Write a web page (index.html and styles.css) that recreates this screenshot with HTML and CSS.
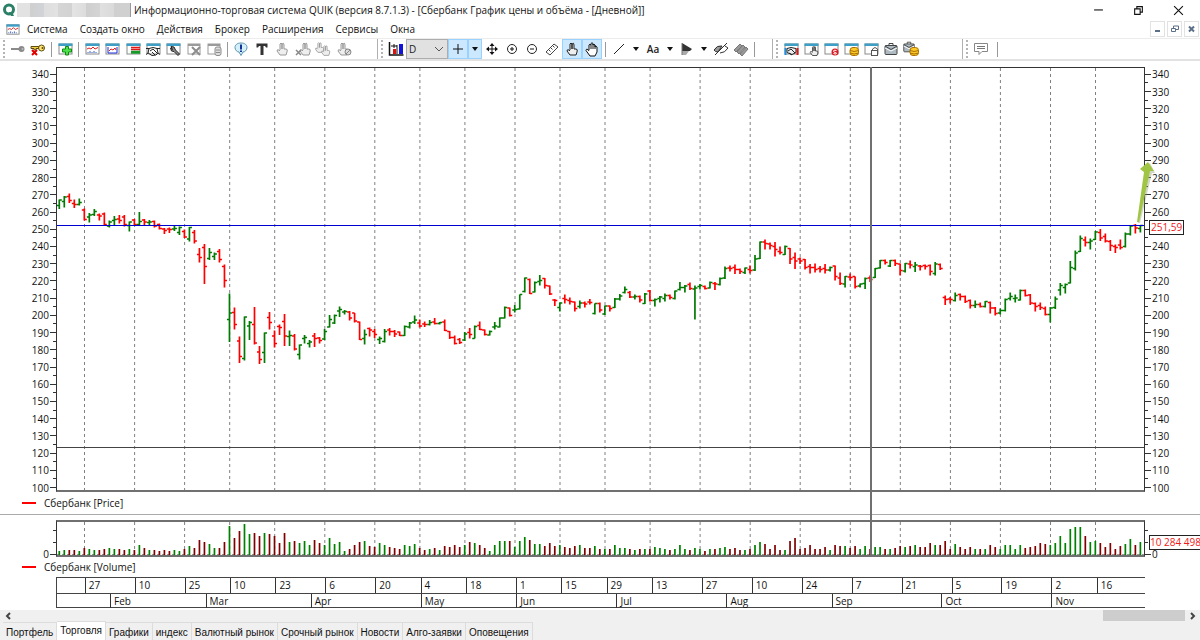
FILE: index.html
```html
<!DOCTYPE html>
<html lang="ru">
<head>
    <meta charset="UTF-8">
    <meta name="viewport" content="width=device-width, initial-scale=1.0">
    <title>Информационно-торговая система QUIK</title>
    <link rel="stylesheet" href="styles.css">
</head>
<body>

    <!-- Иконки панели инструментов -->
    <svg class="sprite" aria-hidden="true">
        <symbol id="win" viewBox="0 0 16 16">
            <rect x="2" y="3" width="13" height="10" fill="#fff" stroke="#8a8a8a"/>
            <rect x="1.500" y="2.500" width="14" height="2.500" fill="#3d9fc6"/>
        </symbol>
        <symbol id="win-grey" viewBox="0 0 16 16">
            <rect x="2" y="3" width="12" height="10" fill="#fff" stroke="#9a9a9a"/>
            <path d="M2 4h12" stroke="#9a9a9a" stroke-width="2"/>
        </symbol>
        <symbol id="key-grey" viewBox="0 0 16 16">
            <path d="M1 7h9v2H1z" fill="#8a8a8a"/>
            <circle cx="11.500" cy="8" r="3" fill="#8a8a8a"/><circle cx="12.500" cy="8" r="1" fill="#bbb"/>
        </symbol>
        <symbol id="key-x" viewBox="0 0 16 16">
            <path d="M1 5.500h8v2H6V9H4V7.500H1z" fill="#f2d24a" stroke="#5a4a10"/>
            <circle cx="11.500" cy="7" r="3" fill="#ffe36b" stroke="#5a4a10"/><circle cx="12.500" cy="7" r="1" fill="#5a4a10"/>
            <path d="M2 9l5 5M7 9l-5 5" stroke="#e00000" stroke-width="2"/>
        </symbol>
        <symbol id="win-plus" viewBox="0 0 16 16">
            <use href="#win"/>
            <path d="M8.500 5.500h3v2.500h3v3h-3v3h-3v-3h-3v-3h3z" fill="#4fe04a" stroke="#0a8a12"/>
        </symbol>
        <symbol id="win-chart" viewBox="0 0 16 16">
            <use href="#win"/>
            <path d="M3 8l2-1 2 1 2-2 2 2 3-1.500" fill="none" stroke="#e02020"/>
            <path d="M4 12v-1M6 12v-2M8 12v-1M10 12v-2M12 12v-1" stroke="#3a5fc0"/>
        </symbol>
        <symbol id="win-graph" viewBox="0 0 16 16">
            <use href="#win"/>
            <path d="M4 6v6h9V6" fill="none" stroke="#1c2fe0"/>
            <path d="M5 10l2-2 2 1 2-2 1 2" fill="none" stroke="#e02020"/>
        </symbol>
        <symbol id="win-book" viewBox="0 0 16 16">
            <use href="#win"/>
            <path d="M6 6.500h9M6 8.500h9" stroke="#e01818" stroke-width="1.500"/>
            <path d="M6 10.500h9M6 12h9" stroke="#169a28" stroke-width="1.500"/>
        </symbol>
        <symbol id="win-deal" viewBox="0 0 16 16">
            <use href="#win"/>
            <path d="M1 7.500h3l4-1 4 1h3M1 13.500l2-1.500 4 2.500 4-.5 2-2 2 1.500M4 7.500L3 12M12 7.500l1 4.500M5 10l3-2 4 4M7 11l3 3" fill="#fff" stroke="#222"/>
        </symbol>
        <symbol id="win-tool" viewBox="0 0 16 16">
            <use href="#win"/>
            <path d="M6 5.500l3 .5 1.500 3 4 4-1.500 1.500-4-4-2.500-.5-1-3 2 1.500z" fill="#888" stroke="#222"/>
        </symbol>
        <symbol id="win-x" viewBox="0 0 16 16">
            <use href="#win-grey"/>
            <path d="M6 6l8 8M14 6l-8 8" stroke="#8c8c8c" stroke-width="2"/>
        </symbol>
        <symbol id="win-doc" viewBox="0 0 16 16">
            <use href="#win-grey"/>
            <rect x="9" y="6" width="6" height="8.500" rx="2" fill="#ddd" stroke="#8c8c8c"/>
            <path d="M10 9h4M10 11.500h4" stroke="#8c8c8c"/>
        </symbol>
        <symbol id="note" viewBox="0 0 16 16">
            <path d="M8 2c4 0 6 2 6 4.500S12 11 10 11l-2 3.500L6 11C4 11 2 9 2 6.500S4 2 8 2z" fill="#d4f0fb" stroke="#5b93ad"/>
            <path d="M8 3.500v5M8 9.500v1.500" stroke="#12329a" stroke-width="2"/>
        </symbol>
        <symbol id="tee" viewBox="0 0 16 16">
            <path d="M2.500 2.500h11v4h-1.500l-1-1.500h-1.500v9h-3V5H5L4 6.500H2.500z" fill="#333"/>
        </symbol>
        <symbol id="hand" viewBox="0 0 16 16">
            <path d="M6 9V3q1-2 2 0v5V3q2-2 2 1v4l2 0q2 0 1 3l-1 3H6L3 10q0-2 2-1l1 1" fill="#eee" stroke="currentColor"/>
        </symbol>
        <symbol id="hand-x" viewBox="0 0 16 16">
            <use href="#hand" x="2"/>
            <path d="M1 9l5 5M6 9l-5 5" stroke="#888" stroke-width="1.500"/>
        </symbol>
        <symbol id="hands" viewBox="0 0 16 16">
            <use href="#hand" x="-2" y="0" width="13" height="13"/><use href="#hand" x="4" y="3" width="13" height="13"/>
        </symbol>
        <symbol id="hand-stop" viewBox="0 0 16 16">
            <use href="#hand" x="-1"/>
            <circle cx="12" cy="11" r="3" fill="#ddd" stroke="#888"/><path d="M10 13l4-4" stroke="#888"/>
        </symbol>
        <symbol id="palm" viewBox="0 0 16 16">
            <path d="M5 9V4q1-1.500 2 0V2.500q1-1.500 2 0V4q1-1.500 2 0V6q1-1.500 2 0v5l-2 4H6L2 9.500Q2 7.500 4 8.500L5 10M7 4v4M9 3v5M11 4v4" fill="#fff" stroke="#111"/>
        </symbol>
        <symbol id="bars" viewBox="0 0 16 16">
            <path d="M1.500 1v13h14" fill="none" stroke="#111" stroke-width="1.500"/>
            <rect x="5" y="8" width="3" height="5" fill="#e01010"/><rect x="11" y="3" width="4" height="10" fill="#1414d8"/>
            <path d="M3 5h6M6 3v4M9 4v9" stroke="#111"/>
        </symbol>
        <symbol id="plus" viewBox="0 0 16 16"><path d="M8 3v10M3 8h10" stroke="#111"/></symbol>
        <symbol id="move" viewBox="0 0 16 16">
            <path d="M8 3v10M3 8h10" stroke="#111"/>
            <path d="M8 2l2.500 3h-5zM8 14l2.500-3h-5zM2 8l3-2.500v5zM14 8l-3-2.500v5z" fill="#111"/>
        </symbol>
        <symbol id="zoom-in" viewBox="0 0 16 16">
            <circle cx="8" cy="8" r="4.500" fill="#fff" stroke="#222"/><path d="M8 6v4M6 8h4" stroke="#111"/>
        </symbol>
        <symbol id="zoom-out" viewBox="0 0 16 16">
            <circle cx="8" cy="8" r="4.500" fill="#fff" stroke="#222"/><path d="M6 8h4" stroke="#111"/>
        </symbol>
        <symbol id="ruler" viewBox="0 0 16 16">
            <path d="M2 11l8-8 4 3-8 8zM5 9l1.500 1.500M7 7l1.500 1.500M9 5l1.500 1.500" fill="#fff" stroke="#444"/>
        </symbol>
        <symbol id="line" viewBox="0 0 16 16"><path d="M3 13L13 3" stroke="#222"/></symbol>
        <symbol id="down" viewBox="0 0 8 16"><path d="M1 6h6l-3 4z" fill="#111"/></symbol>
        <symbol id="tri" viewBox="0 0 16 16">
            <path d="M3 2l10 6-2 2H3z" fill="#333"/><path d="M3 10h7l-3 4H3z" fill="#aaa"/><path d="M3 2v12" stroke="#777"/>
        </symbol>
        <symbol id="eye" viewBox="0 0 16 16">
            <path d="M1 9q3-5 8-4l-4 6q-3 0-4-2z" fill="#999" stroke="#333"/>
            <path d="M12 5l3 2q-3 5-8 5M2 14L14 2" fill="none" stroke="#333"/>
        </symbol>
        <symbol id="erase" viewBox="0 0 16 16">
            <path d="M1 9l6-6 2 2-6 6zM4 11l6-7 2 2-6 7zM7 13l6-7 2 2-6 7z" fill="#999" stroke="#777"/>
        </symbol>
        <symbol id="deal" viewBox="0 0 16 16">
            <use href="#win"/>
            <path d="M2.500 7v7" stroke="#1c8fe0" stroke-width="2"/><path d="M14.500 7v7" stroke="#e01818" stroke-width="2"/>
            <path d="M4 7.500l4-1 5 1v4l-4 2-5-2zM5 10l3-2 4 4M6 12l3 2" fill="#eee" stroke="#222"/>
        </symbol>
        <symbol id="win-hand" viewBox="0 0 16 16">
            <use href="#win"/><use href="#hand" x="5" y="4" width="12" height="12"/>
        </symbol>
        <symbol id="win-stop" viewBox="0 0 16 16">
            <use href="#win"/>
            <circle cx="12" cy="11" r="3.500" fill="#d81c24"/><path d="M13.500 9.500q-3-1-3 .5t3 2q0 2-3 .5" fill="none" stroke="#fff"/>
        </symbol>
        <symbol id="win-coin" viewBox="0 0 16 16">
            <use href="#win"/><use href="#coins"/>
        </symbol>
        <symbol id="coins" viewBox="0 0 16 16">
            <rect x="7" y="6.500" width="8.500" height="8" rx="3" fill="#ffc928" stroke="#a87000"/>
            <path d="M7 9.500q4 2 8.500 0M7 12q4 2 8.500 0" fill="none" stroke="#a87000"/>
        </symbol>
        <symbol id="win-lock" viewBox="0 0 16 16">
            <use href="#win"/>
            <path d="M9.500 10V8q2.500-3 5 0v2" fill="none" stroke="#555"/>
            <rect x="8.500" y="9.500" width="6" height="5" fill="#fff" stroke="#555"/>
        </symbol>
        <symbol id="case" viewBox="0 0 16 16">
            <path d="M6 5V2.500h4V5" fill="none" stroke="#444"/>
            <rect x="2" y="4.500" width="12" height="9" rx="1" fill="#aebac2" stroke="#444"/>
            <path d="M2 7l6 3 6-3" fill="none" stroke="#fff"/><path d="M2 5l6 3.500 6-3.500" fill="none" stroke="#444"/>
        </symbol>
        <symbol id="case-coin" viewBox="0 0 16 16">
            <use href="#case" x="-1" y="-1" width="14" height="14"/><use href="#coins"/>
        </symbol>
        <symbol id="chat" viewBox="0 0 16 16">
            <path d="M1.500 2.500h13v8H9l-3 3v-3H1.500z" fill="#fff" stroke="#888"/><path d="M4 5.500h8M4 7.500h8" stroke="#777"/>
        </symbol>
    </svg>

    <header class="title-bar">
        <svg class="logo" viewBox="0 0 14 14">
            <circle cx="7" cy="6.500" r="4.500" fill="none" stroke="#2c8068" stroke-width="3"/>
            <path d="M7 9l2 4h3l-2-4z" fill="#2c8068"/>
        </svg>
        <span class="account"></span>
        <h1>Информационно-торговая система QUIK (версия 8.7.1.3) - [Сбербанк График цены и объёма - [Дневной]]</h1>
        <div class="window-buttons">
            <button aria-label="Свернуть"><svg viewBox="0 0 10 10"><path d="M1 4.500h8" stroke="#111"/></svg></button>
            <button aria-label="Восстановить"><svg viewBox="0 0 10 10"><path d="M1.500 3.500h5v5h-5zM3.500 3V1.500h5v5H7" fill="none" stroke="#111"/></svg></button>
            <button aria-label="Закрыть"><svg viewBox="0 0 10 10"><path d="M1 1l8 8M9 1L1 9" stroke="#111"/></svg></button>
        </div>
    </header>

    <nav class="menu">
        <svg class="menu-icon"><use href="#win-chart"/></svg>
        <a href="#">Система</a>
        <a href="#">Создать окно</a>
        <a href="#">Действия</a>
        <a href="#">Брокер</a>
        <a href="#">Расширения</a>
        <a href="#">Сервисы</a>
        <a href="#">Окна</a>
        <div class="mdi-buttons">
            <button aria-label="Свернуть график"><svg viewBox="0 0 10 10"><path d="M2 7h5" stroke="#5b6f88" stroke-width="2"/></svg></button>
            <button aria-label="Восстановить график"><svg viewBox="0 0 10 10"><path d="M1.500 4.500h4v3h-4zM3.500 4V2h5v3.500H6" fill="none" stroke="#5b6f88"/></svg></button>
            <button aria-label="Закрыть график"><svg viewBox="0 0 10 10"><path d="M2 2.500l5 5M7 2.500l-5 5" stroke="#5b6f88" stroke-width="2"/></svg></button>
        </div>
    </nav>

    <div class="toolbar">
        <div class="tools tools-main">
            <button aria-label="Подключиться"><svg><use href="#key-grey"/></svg></button>
            <button aria-label="Отключиться"><svg><use href="#key-x"/></svg></button>
            <i class="sep"></i>
            <button aria-label="Создать окно"><svg><use href="#win-plus"/></svg></button>
            <i class="sep"></i>
            <div class="set set-windows">
                <button aria-label="Текущие торги"><svg><use href="#win-chart"/></svg></button>
                <button aria-label="График"><svg><use href="#win-graph"/></svg></button>
                <button aria-label="Стакан"><svg><use href="#win-book"/></svg></button>
                <button aria-label="Сделки"><svg><use href="#win-deal"/></svg></button>
                <button aria-label="Настройки"><svg><use href="#win-tool"/></svg></button>
                <button aria-label="Удалить"><svg><use href="#win-x"/></svg></button>
                <button aria-label="Данные"><svg><use href="#win-doc"/></svg></button>
            </div>
            <i class="sep"></i>
            <div class="set set-orders">
                <button aria-label="Сообщение"><svg><use href="#note"/></svg></button>
                <button aria-label="Транзакции"><svg><use href="#tee"/></svg></button>
                <button aria-label="Заявка" class="dim"><svg><use href="#hand"/></svg></button>
                <button aria-label="Снять заявку" class="dim"><svg><use href="#hand-x"/></svg></button>
                <button aria-label="Заявки" class="dim"><svg><use href="#hands"/></svg></button>
                <button aria-label="Стоп-заявка" class="dim"><svg><use href="#hand-stop"/></svg></button>
            </div>
        </div>
        <div class="tools tools-chart">
            <button aria-label="Тип графика"><svg><use href="#bars"/></svg></button>
            <select class="period" aria-label="Интервал"><option>D</option></select>
            <button aria-label="Перекрестие" class="on"><svg><use href="#plus"/></svg></button>
            <button aria-label="Виды перекрестия" class="on drop"><svg><use href="#down"/></svg></button>
            <button aria-label="Переместить"><svg><use href="#move"/></svg></button>
            <button aria-label="Увеличить"><svg><use href="#zoom-in"/></svg></button>
            <button aria-label="Уменьшить"><svg><use href="#zoom-out"/></svg></button>
            <button aria-label="Линейка"><svg><use href="#ruler"/></svg></button>
            <button aria-label="Выбор" class="on"><svg><use href="#hand"/></svg></button>
            <button aria-label="Рука" class="on"><svg><use href="#palm"/></svg></button>
            <i class="sep"></i>
            <button aria-label="Линия"><svg><use href="#line"/></svg></button>
            <button aria-label="Виды линий" class="drop"><svg><use href="#down"/></svg></button>
            <button class="text-tool">Aa</button>
            <button aria-label="Виды текста" class="drop"><svg><use href="#down"/></svg></button>
            <button aria-label="Метка"><svg><use href="#tri"/></svg></button>
            <button aria-label="Виды меток" class="drop"><svg><use href="#down"/></svg></button>
            <button aria-label="Скрыть"><svg><use href="#eye"/></svg></button>
            <button aria-label="Стереть"><svg><use href="#erase"/></svg></button>
            <i class="sep"></i>
        </div>
        <div class="tools tools-tables">
            <div class="set set-tables">
                <button aria-label="Таблица сделок"><svg><use href="#deal"/></svg></button>
                <button aria-label="Таблица заявок"><svg><use href="#win-hand"/></svg></button>
                <button aria-label="Таблица стоп-заявок"><svg><use href="#win-stop"/></svg></button>
                <button aria-label="Лимиты по деньгам"><svg><use href="#win-coin"/></svg></button>
                <button aria-label="Лимиты по бумагам"><svg><use href="#win-lock"/></svg></button>
                <button aria-label="Портфель"><svg><use href="#case"/></svg></button>
                <button aria-label="Клиентский портфель"><svg><use href="#case-coin"/></svg></button>
            </div>
        </div>
        <div class="tools tools-chat">
            <button aria-label="Чат"><svg><use href="#chat"/></svg></button>
            <i class="sep"></i>
        </div>
    </div>

    <main class="chart">
        <ul class="axis axis-left" id="price-left"></ul>
        <svg class="plot price-plot" id="price" viewBox="0 0 1087 422" preserveAspectRatio="none"></svg>
        <div class="axis-box">
            <ul class="axis axis-right" id="price-right"></ul>
            <svg class="arrow" viewBox="0 0 18 64">
                <path d="M1 62L9 12L5 9L13 2L18 12L15 12L3 62z" fill="#8a9a70" opacity="0.4"/>
                <path d="M0 61L7 11L3 8L11 1L17 10L13 10L2 61z" fill="#a0c544"/>
            </svg>
            <span class="tag price-tag">251,59</span>
        </div>

        <p class="legend price-legend">Сбербанк [Price]</p>

        <ul class="axis axis-left volume-axis"><li></li><li></li><li class="major">0</li></ul>
        <svg class="plot volume-plot" id="volume" viewBox="0 0 1087 33" preserveAspectRatio="none"></svg>
        <div class="axis-box volume-box">
            <ul class="axis axis-right volume-axis"><li></li><li></li><li class="major">0</li></ul>
            <span class="tag volume-tag">10 284 498</span>
        </div>

        <svg class="crosshair" viewBox="0 0 1087 10" preserveAspectRatio="none"><path d="M814 0v10" stroke="#707070" stroke-width="2"/></svg>

        <p class="legend volume-legend">Сбербанк [Volume]</p>

        <div class="time">
            <div class="time-row" id="days"></div>
            <div class="time-row" id="months"></div>
        </div>
    </main>

    <div class="scrollbar">
        <button aria-label="Влево"><svg viewBox="0 0 8 8"><path d="M6 1L3 4l3 3" fill="none" stroke="#444" stroke-width="2"/></svg></button>
        <div class="track"><div class="thumb"></div></div>
        <button aria-label="Вправо"><svg viewBox="0 0 8 8"><path d="M2 1l3 3-3 3" fill="none" stroke="#444" stroke-width="2"/></svg></button>
    </div>

    <nav class="tabs">
        <a href="#">Портфель</a>
        <a href="#" class="active">Торговля</a>
        <a href="#">Графики</a>
        <a href="#">индекс</a>
        <a href="#">Валютный рынок</a>
        <a href="#">Срочный рынок</a>
        <a href="#">Новости</a>
        <a href="#">Алго-заявки</a>
        <a href="#">Оповещения</a>
    </nav>

    <script src="chart.js"></script>
</body>
</html>
```

FILE: styles.css
```css
* {
    box-sizing: border-box;
}

body {
    font-family: 'Open Sans', sans-serif;
    font-size: 10px;
    color: #111;
    background: #fff;
    margin: 0;
    height: 100vh;
    display: flex;
    flex-direction: column;
    overflow: hidden;
}

h1, p, ul {
    margin: 0;
    padding: 0;
    font-weight: normal;
}

button {
    border: 0;
    padding: 0;
    background: none;
    color: #222;
    display: flex;
    align-items: center;
    justify-content: center;
}

a {
    color: #111;
    text-decoration: none;
    white-space: nowrap;
}

.sprite {
    display: none;
}

/* Заголовок окна */
.title-bar {
    flex: none;
    height: 20px;
    display: flex;
    align-items: center;
    padding-left: 2px;
}

.logo {
    width: 14px;
    height: 14px;
}

.account {
    width: 114px;
    height: 14px;
    margin: 0 3px 0 1px;
    border-right: 1px solid #999;
    background: linear-gradient(to right, #e2e2e2 13px, #cfcfcf 13px, #d0d3d8 27px, #dedede 27px, #e2e2e2 41px, #d6d6d6 41px, #d2d2d2 55px, #e4e4e4 55px, #dcdcdc 69px, #cecece 69px, #d4d4d4 83px, #e0e0e0 83px, #dadada 97px, #d0d0d0 97px);
}

.title-bar h1 {
    font-size: 10px;
    line-height: 20px;
    white-space: nowrap;
}

.window-buttons {
    display: flex;
    margin-left: auto;
    padding-right: 2px;
}

.window-buttons button {
    width: 40px;
    height: 18px;
}

.window-buttons svg {
    width: 11px;
    height: 11px;
}

/* Меню */
.menu {
    flex: none;
    height: 18px;
    display: flex;
    align-items: center;
    gap: 12px;
    padding-left: 5px;
    font-size: 10px;
}

.menu-icon {
    width: 15px;
    height: 15px;
    margin-right: -5px;
}

.mdi-buttons {
    display: flex;
    gap: 2px;
    margin-left: auto;
    padding-right: 1px;
}

.mdi-buttons button {
    width: 15px;
    height: 16px;
    border: 1px solid #e2e2e2;
}

.mdi-buttons svg {
    width: 10px;
    height: 10px;
}

/* Панель инструментов */
.toolbar {
    flex: none;
    height: 23px;
    display: flex;
    border-top: 1px solid #ececec;
    border-bottom: 2px solid #e2e2e2;
}

.tools {
    display: flex;
    align-items: center;
    padding-left: 5px;
    border-right: 1px solid #b0b0b0;
}

.tools::before {
    content: "";
    width: 2px;
    height: 18px;
    margin-right: 3px;
    margin-left: -2px;
    background: repeating-linear-gradient(#b4b4b4 0 2px, #fff 2px 4px);
}

.tools-main {
    padding-right: 23px;
}

.tools-chart {
    padding-right: 14px;
}

.tools-tables {
    padding-right: 41px;
}

.tools-chat {
    border-right: 0;
}

.tools-chat .sep {
    margin-left: 6px;
}

.set {
    display: flex;
    justify-content: space-between;
}

.set-windows {
    width: 142px;
}

.set-orders {
    width: 123px;
}

.set-tables {
    width: 140px;
}

.tools button {
    width: 20px;
    height: 20px;
}

.tools svg {
    width: 16px;
    height: 16px;
}

.tools .drop {
    width: 14px;
}

.tools .drop svg {
    width: 8px;
}

.tools .on {
    background: #cce8ff;
    border: 1px solid #99d1ff;
}

.tools .dim {
    color: #999;
}

.tools .text-tool {
    font: 600 10px 'Open Sans', sans-serif;
}

.sep {
    width: 1px;
    height: 15px;
    margin: 0 3px;
    background: #999;
}

.period {
    width: 42px;
    height: 20px;
    padding: 0 2px;
    border: 1px solid #adadad;
    background: #e1e1e1 url("data:image/svg+xml,%3Csvg xmlns='http://www.w3.org/2000/svg' width='10' height='8'%3E%3Cpath d='M1 2l4 4 4-4' fill='none' stroke='%23555'/%3E%3C/svg%3E") no-repeat right 3px center;
    appearance: none;
    font: 10px 'Open Sans', sans-serif;
    color: #222;
}

/* График */
.chart {
    flex: 1;
    min-height: 0;
    display: grid;
    grid-template-columns: 56px minmax(0, 1fr) 55px;
    grid-template-rows: minmax(0, 1fr) 23px 42px 20px 31px;
    padding: 6px 0 2px;
}

.plot {
    width: 100%;
    height: 100%;
    border: solid #333;
    border-width: 1px 1px 2px;
    border-bottom-color: #707070;
}

.price-plot {
    grid-row: 1;
    grid-column: 2;
}

.volume-plot {
    grid-row: 3;
    grid-column: 2;
    height: 37px;
    align-self: end;
    border-top: 2px solid #707070;
}

.crosshair {
    grid-row: 1 / 4;
    grid-column: 2;
    width: 100%;
    height: 100%;
    padding: 0 1px;
}

.axis {
    list-style: none;
    height: 100%;
    display: flex;
    flex-direction: column;
    padding-top: 3px;
}

.axis-left {
    grid-row: 1;
    grid-column: 1;
}

.axis li {
    flex: 1;
    min-height: 0;
    display: flex;
    align-items: center;
    gap: 1px;
    line-height: 8px;
}

.axis-left li {
    justify-content: flex-end;
}

.axis-right li {
    flex-direction: row-reverse;
    justify-content: flex-end;
}

.axis li::after {
    content: "";
    width: 3px;
    height: 1px;
    background: #333;
}

.axis .major::after {
    width: 6px;
}

.axis-box {
    position: relative;
    grid-column: 3;
    grid-row: 1;
    min-height: 0;
}

.volume-box {
    grid-row: 3;
    height: 37px;
    align-self: end;
}

.volume-axis {
    height: 40px;
    padding-top: 5px;
}

.axis-left.volume-axis {
    grid-row: 3;
    height: 45px;
    padding-top: 10px;
}

.tag {
    position: absolute;
    left: 4px;
    padding: 0 1px;
    border: 1px solid #222;
    background: #fff;
    color: #f01818;
    line-height: 13px;
    white-space: nowrap;
}

.price-tag {
    top: 36%;
}

.volume-tag {
    top: 15px;
    padding: 0;
}

.arrow {
    position: absolute;
    left: -8px;
    top: 22%;
    width: 18px;
    height: 64px;
}

.legend {
    grid-column: 1 / 4;
    display: flex;
    align-items: center;
    gap: 8px;
    padding-left: 22px;
}

.legend::before {
    content: "";
    width: 14px;
    height: 2px;
    background: #f00;
}

.price-legend {
    grid-row: 2;
    border-bottom: 1px solid #aaa;
}

.volume-legend {
    grid-row: 4;
}

.time {
    grid-row: 5;
    grid-column: 2;
    border: solid #444;
    border-width: 1px 0 1px 1px;
}

.time-row {
    display: flex;
    height: 15px;
}

.time-row + .time-row {
    border-top: 1px solid #444;
}

.time-row span {
    flex-basis: 0;
    min-width: 0;
    padding-left: 3px;
    line-height: 14px;
    border-left: 1px solid #333;
}

.time-row span:first-child {
    border-left: 0;
}

/* Прокрутка и вкладки */
.scrollbar {
    flex: none;
    height: 11px;
    display: flex;
    background: #f0f0f0;
}

.scrollbar button {
    width: 15px;
}

.scrollbar svg {
    width: 8px;
    height: 8px;
}

.track {
    flex: 1;
    display: flex;
    justify-content: flex-end;
}

.thumb {
    width: 7%;
    background: #cdcdcd;
}

.tabs {
    flex: none;
    height: 19px;
    display: flex;
    align-items: flex-end;
    padding-left: 3px;
    background: #f0f0f0;
    font-family: 'Liberation Sans', sans-serif;
}

.tabs a {
    height: 18px;
    padding: 0 3px;
    line-height: 20px;
    border: solid #dcdcdc;
    border-width: 1px 1px 0 0;
}

.tabs .active {
    height: 19px;
    line-height: 17px;
    background: #fff;
}
```

FILE: chart.js
```js
// high low open close, координаты по высоте окна
const prices = `199.5 209 205.5 200|196 207.5 201.5 197|193.5 203 196.5 200.5|199.5 208 203.5 204.5|198.5 205.5 204.5 202.5
208.5 220.5 210 219.5|213 222.5 217 215|209 216 214.5 211.5|213.5 220.5 215 216|212.5 225.5 214 224.5
220.5 227.5 226 222|216 225.5 220.5 219.5|215 223.5 219 220.5|215 226.5 217 224.5|221.5 231.5 225.5 222
219 226 220 224.5|212 225 224.5 221.5|219 225.5 220 222|220 225 222.5 222|220.5 227.5 221.5 226
223.5 229.5 224.5 228.5|228 234 229 230.5|227.5 233 229 229.5|225.5 231 229 228.5|226.5 235 232.5 227.5
229.5 238 231.5 237|227 241.5 239 227.5|230 243.5 232.5 241|248 262.5 254.5 257.5|244 284 247.5 266.5
248 260 258.5 252.5|252.5 260 256.5 254|249 262.5 251.5 259.5|264.5 287.5 266.5 280.5|293.5 342 319.5 313
307.5 329.5 312.5 324.5|336.5 363 341 356.5|316.5 360.5 358.5 317|321 340 326 322.5|307 344.5 324.5 343
346 364 352 359.5|332.5 363 352.5 333|312 329.5 317.5 322.5|330.5 347.5 336 343.5|324.5 335 326.5 327.5
314 346 321.5 336|330.5 346 336.5 335.5|334 350.5 336 349|344.5 359.5 354.5 345|335 343.5 338.5 337.5
340 347.5 343.5 342|333 347 336 338.5|337 343.5 338 340.5|329 340 339 331.5|315 327.5 327 319.5
314.5 324 323 315.5|306.5 317 311 309.5|310 314.5 312 311.5|311 320.5 312 318|313 322.5 313 321
321.5 340 322 339.5|329.5 344.5 338.5 334.5|327.5 336.5 328.5 330|329 338 331.5 334.5|336.5 344 339.5 338.5
329 342.5 341.5 331.5|328 335.5 330 331.5|330 337 331.5 334|331.5 336 332 335.5|325.5 336 335.5 326.5
322 328.5 327 323|315.5 324 322 320|319.5 327.5 323 326|321.5 327 324 324.5|320 325.5 324.5 322.5
318 324.5 322 323.5|322 324.5 323.5 322.5|319.5 331 322 330.5|331 339 331.5 337.5|335.5 344.5 337.5 343.5
338 344 339.5 342.5|332 341 340 334|328 338.5 332.5 334.5|325.5 338.5 338.5 326.5|321.5 330 325.5 329.5
329.5 335.5 330 334.5|330.5 335.5 335 331.5|322 329.5 327 326|317.5 327.5 327 318|306.5 318.5 318 307.5
307.5 316.5 308 315.5|305 312.5 310 309.5|294.5 309.5 309 294.5|277.5 292.5 291.5 278|278.5 294 279.5 293.5
281.5 292.5 292 282.5|275 285.5 281.5 280.5|278 288.5 278.5 285.5|285.5 295 286 294|299 306 300 300.5
302.5 311.5 307.5 303|294.5 303.5 298.5 299.5|297.5 304.5 300.5 301.5|301.5 311.5 302 308.5|300.5 308.5 306.5 303
301.5 307.5 303 304|299 304.5 302 302.5|303.5 314.5 313.5 303.5|302.5 312.5 303.5 310|305.5 315 314 306
305.5 311.5 306 308.5|298 308 307.5 299|294 300.5 299 296|286.5 293.5 292.5 289.5|291 298 292.5 297
294.5 299.5 297 296.5|295.5 302.5 296.5 300|293 304 303.5 294|290 301.5 291 300.5|298.5 306.5 300.5 299.5
296 302.5 298.5 297|293.5 301.5 298.5 295.5|294.5 299.5 295.5 297.5|290.5 299.5 298.5 291|282 290.5 289.5 287.5
285 292.5 287.5 286|282.5 290 284.5 288.5|285.5 319.5 289 288|284 289.5 286.5 285.5|285.5 289.5 286.5 288.5
281.5 288.5 288 282.5|282 290 283.5 284|277.5 285.5 284.5 278.5|266.5 279 278 268.5|265.5 271.5 268 268.5
264.5 274 267.5 269.5|268.5 274 269.5 271.5|267.5 274 272.5 268|265.5 273.5 269.5 270.5|255 271 270 259
241.5 259 258.5 242|239.5 249.5 242 243.5|242.5 249.5 244 245.5|242 256.5 246.5 249.5|246.5 254.5 251.5 252.5
245.5 255 254.5 246.5|248 264 248.5 259|252.5 269 257.5 261|257.5 264 259 261|259 269.5 259.5 267.5
264 273.5 266.5 267.5|263.5 272.5 267.5 269.5|266 272.5 268.5 269.5|264 273.5 268.5 270|266.5 271.5 270 267.5
265.5 280.5 266 276.5|272.5 285 278 283.5|276 287.5 284 276.5|273.5 280.5 277 277.5|276.5 288.5 276.5 286.5
283.5 287.5 286 284|277.5 289 283.5 278.5|275.5 282 278 279.5|268 278 277.5 268.5|260 268.5 268 260.5
259.5 264.5 260.5 262.5|260 267 266 260.5|259.5 266 260.5 263.5|263.5 275.5 264 270.5|263 272.5 271 263.5
260.5 268.5 264 265|262 272 266.5 265|265 270.5 266 266.5|264.5 269.5 265.5 266.5|264.5 275.5 265.5 271.5
262 275.5 273.5 264|263.5 270 264.5 268.5|295.5 305 297.5 299.5|297 303.5 299 299.5|292.5 301.5 300.5 295.5
293.5 300.5 294.5 296.5|295.5 303 296.5 301.5|299.5 308.5 300.5 305.5|300.5 308 305.5 304.5|302.5 307.5 304.5 306.5
301 307.5 306.5 301.5|301.5 313.5 302.5 308|307 315.5 308 313.5|308.5 314.5 313 310.5|298.5 311.5 310.5 299.5
292.5 300.5 298.5 296.5|294.5 302.5 298.5 298|289.5 300.5 300 290.5|289.5 296.5 290.5 295.5|294 305 295 303
302.5 311.5 303.5 306.5|302.5 310 305.5 307.5|306.5 315.5 308.5 314.5|307 322.5 314.5 308|296.5 309 307.5 299
283 295.5 290 285.5|283.5 293.5 287.5 284.5|261 283.5 283 267.5|250.5 270.5 268.5 253|235.5 252 251.5 238.5
236.5 246.5 240 242.5|238.5 249.5 242.5 241|231 240 239.5 232|229 241 232.5 238|233.5 242.5 236.5 241
240 251 241.5 245.5|244.5 253 246.5 247.5|239.5 249.5 245 247.5|232.5 247.5 246.5 234|225.5 235.5 234 226
224 233.5 225.5 228|225 232.5 228.5 225.5`.split(/[|\n]/).map(row => row.trim().split(' ').map(Number));

const volumes = [4, 5, 5, 5, 4, 7, 6, 5, 5, 6, 7, 6, 6, 5, 6, 5, 10, 7, 5, 5, 4, 5, 4, 5, 4, 6, 9, 7, 15, 13, 11, 7, 7, 13, 29,
    17, 24, 31, 21, 22, 19, 22, 21, 19, 12, 22, 13, 14, 12, 14, 10, 15, 12, 10, 17, 11, 13, 4, 6, 10, 13, 14, 9, 8, 12, 10, 8, 7,
    6, 10, 9, 11, 7, 5, 6, 7, 5, 9, 8, 10, 8, 10, 13, 12, 10, 7, 4, 10, 14, 14, 14, 8, 14, 18, 15, 11, 11, 9, 12, 9, 10, 8, 7, 9,
    10, 7, 7, 9, 6, 6, 6, 10, 7, 7, 6, 5, 6, 6, 6, 8, 7, 6, 5, 6, 10, 6, 5, 7, 6, 4, 6, 6, 7, 8, 6, 7, 5, 5, 6, 10, 13, 11, 6, 10,
    5, 5, 14, 17, 6, 7, 10, 6, 6, 8, 5, 10, 9, 9, 7, 9, 6, 9, 6, 8, 8, 6, 6, 7, 9, 8, 9, 10, 8, 8, 12, 10, 10, 14, 6, 11, 8, 6, 8,
    6, 6, 6, 10, 8, 6, 10, 10, 6, 10, 7, 8, 9, 12, 11, 10, 12, 19, 12, 26, 28, 28, 19, 13, 14, 12, 8, 12, 6, 9, 11, 16, 10, 13];

// подпись и ширина ячейки в барах
const days = [['', 5.4], [27, 10], [10, 10], [25, 9], [10, 9], [23, 10], [6, 10], [20, 9], [4, 9], [18, 10], [1, 9], [15, 9],
    [29, 9], [13, 10], [27, 10], [10, 10], [24, 10], [7, 10], [21, 10], [5, 10], [19, 10], [2, 9], [16, 9.6]];
const months = [['', 10.4], ['Feb', 19], ['Mar', 21], ['Apr', 22], ['May', 19], ['Jun', 20], ['Jul', 22], ['Aug', 21],
    ['Sep', 22], ['Oct', 22], ['Nov', 18.6]];

const step = 5.005;
const top0 = 68;

// hidden - деление, закрытое меткой последней цены
function fillAxis(id, hidden) {
    let html = '';
    for (let p = 340; p >= 100; p -= 5) {
        html += p % 10 === 0 ? `<li class="major">${p === hidden ? '' : p}</li>` : '<li></li>';
    }
    document.getElementById(id).innerHTML = html;
}

function fillRow(id, cells) {
    document.getElementById(id).innerHTML = cells
        .map(([text, bars]) => `<span style="flex-grow: ${bars}">${text}</span>`)
        .join('');
}

function grid(height) {
    let bars = 0;
    let path = '';
    days.slice(0, -1).forEach(day => {
        bars += day[1];
        path += `M${(bars * step + 0.5).toFixed(1)} 0V${height}`;
    });
    return `<path d="${path}" stroke="#808080" stroke-dasharray="3 3"/>`;
}

let up = '';
let down = '';
let volumeUp = '';
let volumeDown = '';

prices.forEach(([high, low, open, close], i) => {
    const x = 2.3 + i * step;
    const bar = `M${x} ${high - top0}V${low - top0}M${x - 2.5} ${open - top0}H${x}M${x} ${close - top0}H${x + 2.5}`;
    const volume = `M${x} 33v${-volumes[i]}`;
    if (close < open) {
        up += bar;
        volumeUp += volume;
    } else {
        down += bar;
        volumeDown += volume;
    }
});

document.getElementById('price').innerHTML = grid(422) +
    '<path d="M0 379.500H1087" stroke="#444" stroke-width="1"/>' +
    `<path d="${up}" stroke="#007a00" stroke-width="1.700" fill="none"/>` +
    `<path d="${down}" stroke="#ff0000" stroke-width="1.700" fill="none"/>` +
    '<path d="M0 157.500H1087" stroke="#0000d0"/>';

document.getElementById('volume').innerHTML = grid(33) +
    '<path d="M0 32.500H1087" stroke="#999" stroke-dasharray="3 2"/>' +
    `<path d="${volumeUp}" stroke="#008000" stroke-width="1.700"/>` +
    `<path d="${volumeDown}" stroke="#800000" stroke-width="1.700"/>`;

fillAxis('price-left');
fillAxis('price-right', 250);
fillRow('days', days);
fillRow('months', months);
```
